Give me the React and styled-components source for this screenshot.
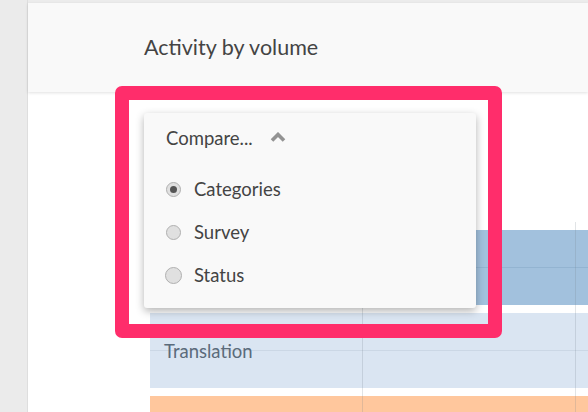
import React from "react";
import styled, { createGlobalStyle } from "styled-components";

const GlobalStyle = createGlobalStyle`
  html, body {
    margin: 0;
    padding: 0;
    background: #ffffff;
    font-family: Lato, "Open Sans", sans-serif;
    overflow: hidden;
  }
`;

const options = [
  { label: "Categories", checked: true, size: 15 },
  { label: "Survey", checked: false, size: 15 },
  { label: "Status", checked: false, size: 17 },
];

const App = () => {
  return (
    <Page>
      <GlobalStyle />
      <Sidebar />
      <Main>
        <TopStrip />
        <Header>
          <Title>Activity by volume</Title>
        </Header>
        <Content>
          <Chart>
            <GridLine $left={212} $top={-8} />
            <GridLine $left={425} $top={-8} />
            <Band $bg="#a2c1dd" $line="#93b4d1" />
            <Band $bg="#dae5f2" $line="#cbd7e5">
              <BandLabel>Translation</BandLabel>
            </Band>
            <Band $bg="#ffc79d" $line="#f5bb90" />
          </Chart>

          <Popover>
            <PopoverHead>
              Compare...
              <Chevron viewBox="0 0 16 10">
                <path d="M2 8.5 L8 2.5 L14 8.5" fill="none" stroke="#939393" strokeWidth="3.6" strokeLinejoin="miter" />
              </Chevron>
            </PopoverHead>
            <OptionList>
              {options.map((o) => (
                <Option key={o.label}>
                  <RadioSlot>
                    <Radio $size={o.size}>{o.checked && <Dot />}</Radio>
                  </RadioSlot>
                  {o.label}
                </Option>
              ))}
            </OptionList>
          </Popover>
        </Content>
        <Highlight />
      </Main>
    </Page>
  );
};

// Styled Components
const Page = styled.div`
  display: flex;
  width: 588px;
  height: 412px;
  overflow: hidden;
`;

const Sidebar = styled.div`
  width: 27px;
  flex-shrink: 0;
  background: #ebebeb;
  border-right: 1px solid #dedede;
`;

const Main = styled.div`
  position: relative;
  flex: 1;
  display: flex;
  flex-direction: column;
  background: #ffffff;
  min-height: 0;
`;

const TopStrip = styled.div`
  height: 3px;
  flex-shrink: 0;
  background: #ececec;
`;

const Header = styled.div`
  height: 89px;
  flex-shrink: 0;
  background: #f9f9f9;
  box-shadow: 0 1px 3px rgba(0, 0, 0, 0.12);
  display: flex;
  align-items: center;
  padding-left: 116px;
  position: relative;
  z-index: 1;
`;

const Title = styled.h2`
  margin: 0;
  margin-top: -2px;
  font-size: 21.5px;
  font-weight: 400;
  color: #444444;
`;

const Content = styled.div`
  position: relative;
  flex: 1;
  min-height: 0;
`;

const Chart = styled.div`
  position: relative;
  margin: 138px 0 0 122px;
  display: flex;
  flex-direction: column;
  gap: 8px;
`;

const GridLine = styled.div`
  position: absolute;
  left: ${(p) => p.$left}px;
  top: ${(p) => p.$top}px;
  bottom: -40px;
  width: 1px;
  background: rgba(120, 130, 140, 0.22);
  z-index: 2;
`;

const Band = styled.div`
  position: relative;
  height: 75px;
  flex-shrink: 0;
  background: ${(p) => p.$bg};
  display: flex;
  align-items: center;

  &::after {
    content: "";
    position: absolute;
    left: 0;
    right: 0;
    top: 37px;
    height: 1px;
    background: ${(p) => p.$line};
  }
`;

const BandLabel = styled.span`
  margin-left: 14px;
  margin-top: 1px;
  font-size: 18.5px;
  color: #5b6b7b;
  position: relative;
  z-index: 1;
`;

const Popover = styled.div`
  position: absolute;
  left: 116px;
  top: 21px;
  width: 332px;
  height: 195px;
  box-sizing: border-box;
  background: #f9f9f9;
  border-radius: 3px;
  box-shadow: 0 3px 8px rgba(0, 0, 0, 0.3);
  padding: 14px 0 0 22px;
  z-index: 3;
`;

const PopoverHead = styled.div`
  display: flex;
  align-items: center;
  height: 22px;
  font-size: 18.5px;
  color: #444444;
`;

const Chevron = styled.svg`
  width: 16px;
  height: 10px;
  margin-left: 17px;
  margin-top: -3px;
`;

const OptionList = styled.div`
  display: flex;
  flex-direction: column;
  gap: 21px;
  margin-top: 29px;
`;

const Option = styled.div`
  display: flex;
  align-items: center;
  height: 22px;
  font-size: 18.5px;
  color: #444444;
`;

const RadioSlot = styled.div`
  width: 14px;
  margin-right: 14px;
  display: flex;
  justify-content: center;
`;

const Radio = styled.span`
  width: ${(p) => p.$size}px;
  height: ${(p) => p.$size}px;
  flex-shrink: 0;
  box-sizing: border-box;
  border-radius: 50%;
  border: 1px solid #b0b0b0;
  background: #e0e0e0;
  display: flex;
  align-items: center;
  justify-content: center;
`;

const Dot = styled.span`
  width: 7px;
  height: 7px;
  border-radius: 50%;
  background: #555555;
`;

const Highlight = styled.div`
  position: absolute;
  left: 87px;
  top: 86px;
  width: 387px;
  height: 252px;
  box-sizing: border-box;
  border: 14px solid #ff2d6b;
  border-radius: 7px;
  z-index: 4;
  pointer-events: none;
`;

export default App;
